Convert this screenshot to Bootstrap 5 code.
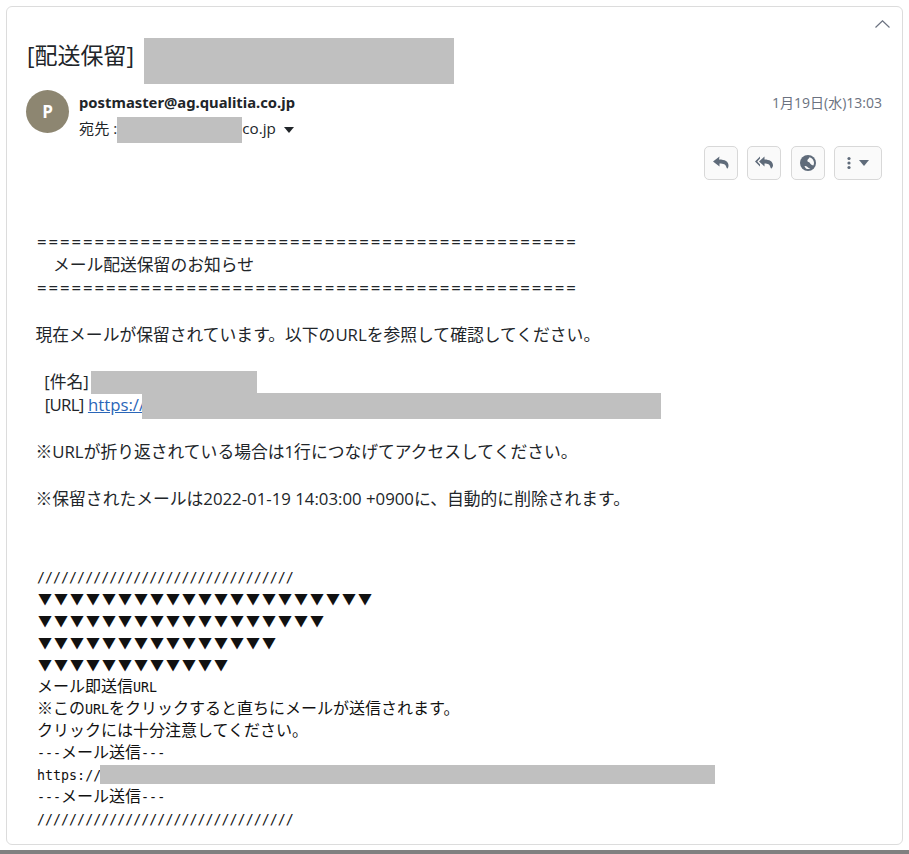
<!DOCTYPE html>
<html lang="ja">
<head>
    <meta charset="UTF-8">
    <meta name="viewport" content="width=device-width, initial-scale=1.0">
    <title>メール</title>
    <link rel="stylesheet" href="https://cdn.jsdelivr.net/npm/bootstrap@5.3.0/dist/css/bootstrap.min.css">
    <style>
        html, body { height: 854px; overflow: hidden; }
        body { font-family: "Open Sans", "Noto Sans CJK JP", sans-serif; color: #212529; background: #fff; font-size: 16.8px; }
        .mail-card { margin: 6px 6px 0 6px; height: 839px; border: 1px solid #dcdcdc; border-radius: 6px; padding: 0 20px 0 19px; }
        .bottom-bar { height: 4px; margin-top: 5px; background: #808080; }
        .collapse-row { height: 31px; padding-top: 13px; justify-content: flex-end; margin-right: -8px; }
        .subject-row { height: 46px; font-size: 23px; line-height: 35px; margin-left: 1px; }
        .redact { display: inline-block; background: #c0c0c0; vertical-align: middle; }
        .r-title { width: 310px; height: 46px; margin-left: 10px; }
        .r-to { width: 125px; height: 26px; margin: -4px 0 -4px 0; }
        .r-subject { width: 166px; height: 23px; margin: -3px 0 -1px 2.5px; }
        .r-url { width: 519px; height: 26px; margin: -4px 0 -3px -3px; }
        .r-mono { width: 615px; height: 19px; margin: -2px 0 0 -1px; }
        .head-row { margin-top: 6px; height: 43px; }
        .sender-avatar { width: 43px; height: 43px; background: #8d8671; color: #fff; font-weight: 700; font-size: 17px; flex: none; }
        .sender-info { margin-left: 10px; font-size: 15.2px; line-height: 20px; }
        .sender-name { font-weight: 700; font-size: 14.8px; margin-top: 2px; font-family: "Noto Sans", sans-serif; }
        .sender-to { margin-top: 6px; white-space: nowrap; }
        .mail-date { color: #6b7280; font-size: 14px; margin-top: 2px; }
        .action-row { margin-top: 13px; gap: 9.5px; }
        .act-btn { height: 34px; width: 34px; padding: 0; background: #fafafa; border: 1px solid #d8d8d8; border-radius: 5px; }
        .act-wide { width: 48px; }
        .mail-text { margin: 49.5px 0 0 9.5px; line-height: 23.4px; white-space: pre; }
        .mail-text a { color: #2a66b8; }
        .rule-line { letter-spacing: 1.91px; margin-left: 1.5px; }
        .tight-label { letter-spacing: -.7px; margin-left: .5px; }
        .mail-mono { margin: 53.5px 0 0 11px; font-size: 16px; line-height: 22px; white-space: pre; font-family: "Noto Sans CJK JP", sans-serif; color: #111; }
        .mono-latin { font-family: "DejaVu Sans Mono", monospace; font-size: 13.33px; line-height: 1; }
        .tri-line { font-size: 14px; letter-spacing: 2px; line-height: 1; margin-left: 1px; }
    </style>
</head>
<body>
    <div class="mail-card">
        <div class="collapse-row d-flex">
            <svg width="15" height="8" viewBox="0 0 15 8" fill="none" stroke="#6b7280" stroke-width="1.2"><path d="M.5 7.5 7.5 .8l7 6.700"/></svg>
        </div>
        <div class="subject-row d-flex">[配送保留]<span class="redact r-title"></span></div>

        <div class="head-row d-flex justify-content-between">
            <div class="d-flex">
                <div class="sender-avatar rounded-circle d-flex align-items-center justify-content-center">P</div>
                <div class="sender-info">
                    <div class="sender-name">postmaster@ag.qualitia.co.jp</div>
                    <div class="sender-to">宛先 :<span class="redact r-to"></span>co.jp
                        <svg class="ms-1" width="10" height="6" viewBox="0 0 10 6" fill="#212529"><path d="M0 0h10L5 6z"/></svg>
                    </div>
                </div>
            </div>
            <div class="mail-date">1月19日(水)13:03</div>
        </div>

        <div class="action-row d-flex justify-content-end">
            <button class="btn act-btn d-flex align-items-center justify-content-center">
                <svg width="16" height="14" viewBox="0 0 16 14" fill="#5f6b7a"><path d="M6.500 .5 0 5.500l6.500 5V7.600c4 0 6.300.9 7 4 .3 1 .9 1.400 1.400.4 .5-.8.600-1.500.600-2.500 0-4-3.500-6-9.500-6z"/></svg>
            </button>
            <button class="btn act-btn d-flex align-items-center justify-content-center">
                <svg width="18" height="14" viewBox="0 0 18 14" fill="#5f6b7a"><path d="M5 .5 0 5.500l5 5V8.400L2.300 5.500 5 2.600zM9.500 .5 4 5.500l5.500 5V7.600c3.500 0 5.300.9 6 4 .3 1 .9 1.400 1.400.4.5-.8 1.100-1.500 1.100-2.500 0-4-3.500-6-8.500-6z"/></svg>
            </button>
            <button class="btn act-btn d-flex align-items-center justify-content-center">
                <svg width="16" height="16" viewBox="0 0 16 16"><circle cx="8" cy="8" r="8" fill="#5f6b7a"/><path fill="#fafafa" d="M9.500 2.200c2.500.6 4.500 2.900 4.500 5.600 0 1-.2 1.900-.7 2.700-1-.5-1.600-.3-2.400-1.200-.7-.8-1.300-2-2.400-2.300-.9-.2-1.500-1.200-.9-2.200.4-.8 1.500-1.300 1.900-2.600zM4.500 11.200c1.500-.5 2.800.5 3.500 1.400.6.7 1.500 1 2.500.9-.8.4-1.600.5-2.500.5-1.400 0-2.700-.8-3.500-2.800z"/></svg>
            </button>
            <button class="btn act-btn act-wide d-flex align-items-center justify-content-center gap-2">
                <svg width="4" height="14" viewBox="0 0 4 14" fill="#5f6b7a"><circle cx="2" cy="2.500" r="1.600"/><circle cx="2" cy="7" r="1.600"/><circle cx="2" cy="11.500" r="1.600"/></svg>
                <svg width="10" height="6" viewBox="0 0 10 6" fill="#5f6b7a"><path d="M0 0h10L5 6z"/></svg>
            </button>
        </div>

        <div class="mail-text"><span class="rule-line">===============================================</span>
    メール配送保留のお知らせ
<span class="rule-line">===============================================</span>

現在メールが保留されています。以下のURLを参照して確認してください。

  [件名]<span class="redact r-subject"></span>
  <span class="tight-label">[URL]</span> <a href="#">https://</a><span class="redact r-url"></span>

※URLが折り返されている場合は1行につなげてアクセスしてください。

※保留されたメールは2022-01-19 14:03:00 +0900に、自動的に削除されます。</div>

        <div class="mail-mono"><span class="mono-latin">////////////////////////////////</span>
<span class="tri-line">▼▼▼▼▼▼▼▼▼▼▼▼▼▼▼▼▼▼▼▼▼</span>
<span class="tri-line">▼▼▼▼▼▼▼▼▼▼▼▼▼▼▼▼▼▼</span>
<span class="tri-line">▼▼▼▼▼▼▼▼▼▼▼▼▼▼▼</span>
<span class="tri-line">▼▼▼▼▼▼▼▼▼▼▼▼</span>
メール即送信<span class="mono-latin">URL</span>
※この<span class="mono-latin">URL</span>をクリックすると直ちにメールが送信されます。
クリックには十分注意してください。
<span class="mono-latin">---</span>メール送信<span class="mono-latin">---</span>
<span class="mono-latin">https://</span><span class="redact r-mono"></span>
<span class="mono-latin">---</span>メール送信<span class="mono-latin">---</span>
<span class="mono-latin">////////////////////////////////</span></div>
    </div>
    <div class="bottom-bar"></div>
    <script src="https://cdn.jsdelivr.net/npm/bootstrap@5.3.0/dist/js/bootstrap.bundle.min.js"></script>
</body>
</html>
